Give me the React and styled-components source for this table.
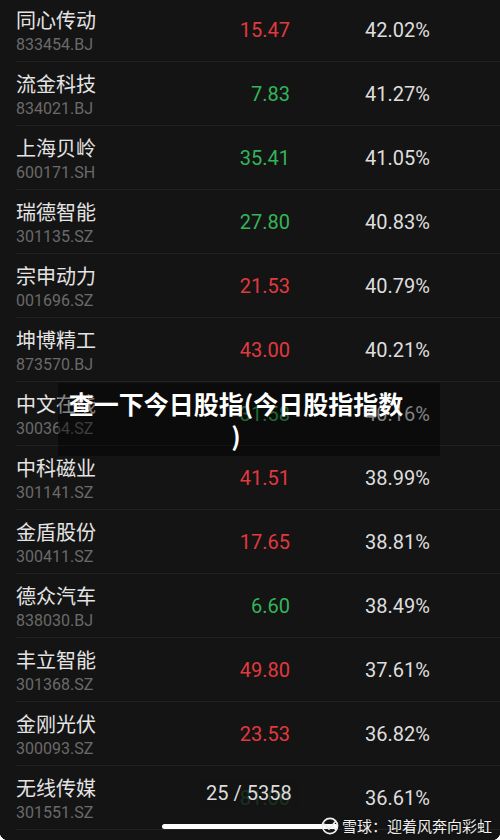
import React from 'react';
import styled, { createGlobalStyle } from 'styled-components';

const GlobalStyle = createGlobalStyle`
  html, body {
    margin: 0;
    padding: 0;
    background: #141414;
    overflow: hidden;
  }
  body {
    font-family: Roboto, "Noto Sans CJK SC", sans-serif;
  }
`;

const Screen = styled.div`
  position: relative;
  width: 500px;
  height: 840px;
  overflow: hidden;
  background: #141414;
`;

const List = styled.div`
  display: flex;
  flex-direction: column;
  margin-top: -2px;
`;

const Row = styled.div`
  display: grid;
  grid-template-columns: 144px 130px 140px 1fr;
  align-items: center;
  height: 63px;
  margin-left: 16px;
  border-bottom: 1px solid #232323;
`;

const NameBlock = styled.div`
  align-self: start;
  padding-top: 9px;
  display: flex;
  flex-direction: column;
`;

const Name = styled.div`
  font-family: "Noto Sans CJK SC", sans-serif;
  font-size: 20px;
  line-height: 25px;
  color: #e4e4e4;
  white-space: nowrap;
`;

const Code = styled.div`
  font-family: Roboto, sans-serif;
  font-size: 16px;
  line-height: 20px;
  margin-top: 3px;
  color: #6a6a6a;
`;

const Price = styled.div`
  font-family: Roboto, sans-serif;
  font-size: 20px;
  text-align: right;
  color: ${p => (p.$up ? '#e0393e' : '#33b45a')};
`;

const Pct = styled.div`
  font-family: Roboto, sans-serif;
  font-size: 20px;
  text-align: right;
  color: #dedede;
`;

const Banner = styled.div`
  position: absolute;
  left: 58px;
  top: 383px;
  width: 382px;
  box-sizing: border-box;
  padding: 4px 36px 5px 10px;
  background: rgba(0, 0, 0, 0.42);
`;

const Title = styled.div`
  font-family: "Noto Sans CJK SC", sans-serif;
  font-weight: 700;
  font-size: 25px;
  line-height: 32px;
  color: #fff;
  text-align: center;
  line-break: anywhere;
`;

const Pager = styled.div`
  position: absolute;
  left: 200px;
  top: 779px;
  padding: 0 6px;
  font-family: Roboto, sans-serif;
  font-size: 20px;
  line-height: 28px;
  color: #dcdcdc;
  background: rgba(20, 20, 20, 0.82);
`;

const HomeBar = styled.div`
  position: absolute;
  left: 162px;
  top: 824px;
  width: 176px;
  height: 5px;
  border-radius: 3px;
  background: #fff;
`;

const Watermark = styled.div`
  position: absolute;
  left: 321px;
  top: 816px;
  display: flex;
  align-items: center;
  gap: 3px;
  font-family: "Noto Sans CJK SC", sans-serif;
  font-size: 15px;
  line-height: 20px;
  color: #efefef;
  text-shadow: 0 0 2px rgba(0, 0, 0, 0.6);
`;

const Corner = styled.div`
  position: absolute;
  bottom: 0;
  ${p => (p.$right ? 'right: 0;' : 'left: 0;')}
  width: 8px;
  height: 8px;
  background: ${p =>
    p.$right
      ? 'radial-gradient(circle at 0 0, transparent 8px, #fff 8.5px)'
      : 'radial-gradient(circle at 100% 0, transparent 8px, #fff 8.5px)'};
`;

const stocks = [
  ['同心传动', '833454.BJ', '15.47', true, '42.02%'],
  ['流金科技', '834021.BJ', '7.83', false, '41.27%'],
  ['上海贝岭', '600171.SH', '35.41', false, '41.05%'],
  ['瑞德智能', '301135.SZ', '27.80', false, '40.83%'],
  ['宗申动力', '001696.SZ', '21.53', true, '40.79%'],
  ['坤博精工', '873570.BJ', '43.00', true, '40.21%'],
  ['中文在线', '300364.SZ', '31.58', false, '40.16%'],
  ['中科磁业', '301141.SZ', '41.51', true, '38.99%'],
  ['金盾股份', '300411.SZ', '17.65', true, '38.81%'],
  ['德众汽车', '838030.BJ', '6.60', false, '38.49%'],
  ['丰立智能', '301368.SZ', '49.80', true, '37.61%'],
  ['金刚光伏', '300093.SZ', '23.53', true, '36.82%'],
  ['无线传媒', '301551.SZ', '81.00', false, '36.61%'],
];

function SnowballLogo() {
  return (
    <svg width="18" height="18" viewBox="0 0 18 18">
      <circle cx="9" cy="9" r="7.6" fill="none" stroke="#efefef" strokeWidth="1.6" />
      <path d="M3.5 7.5 L8 12 L14.5 4.5" fill="none" stroke="#efefef" strokeWidth="1.8" strokeLinecap="round" />
      <path d="M9 10 C11 9 13 10.5 14.5 12.5" fill="none" stroke="#efefef" strokeWidth="1.4" strokeLinecap="round" />
    </svg>
  );
}

export default function App() {
  return (
    <Screen>
      <GlobalStyle />
      <List>
        {stocks.map(([name, code, price, up, pct]) => (
          <Row key={code}>
            <NameBlock>
              <Name>{name}</Name>
              <Code>{code}</Code>
            </NameBlock>
            <Price $up={up}>{price}</Price>
            <Pct>{pct}</Pct>
            <div />
          </Row>
        ))}
      </List>

      <Banner>
        <Title>查一下今日股指(今日股指指数)</Title>
      </Banner>

      <Pager>25 / 5358</Pager>
      <HomeBar />
      <Watermark>
        <SnowballLogo />
        <span>雪球：迎着风奔向彩虹</span>
      </Watermark>
      <Corner />
      <Corner $right />
    </Screen>
  );
}
